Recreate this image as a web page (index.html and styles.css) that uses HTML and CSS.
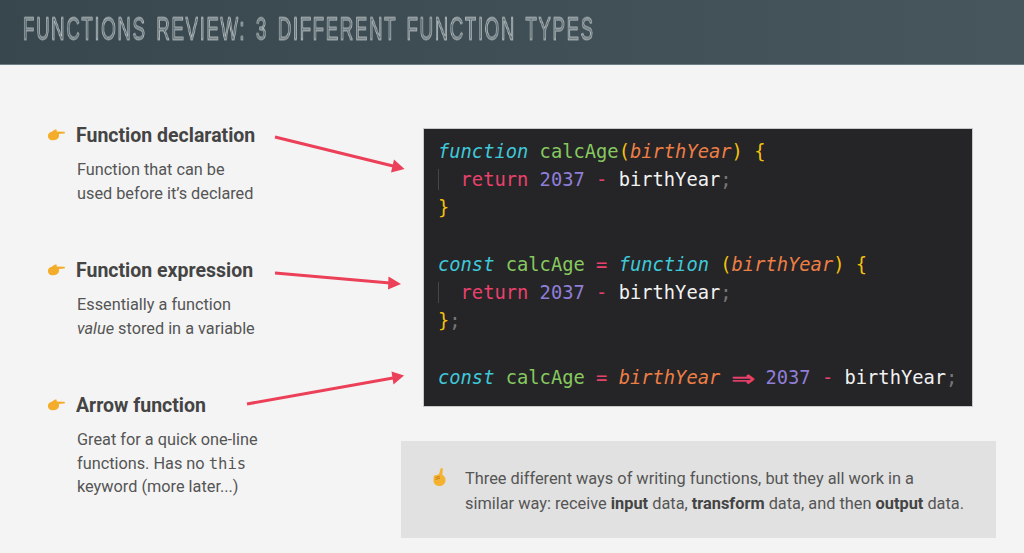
FILE: index.html
```html
<!DOCTYPE html>
<html lang="en">
<head>
<meta charset="utf-8">
<title>Functions Review</title>
<link rel="stylesheet" href="styles.css">
</head>
<body>
<header class="banner"><h1 class="banner-title">FUNCTIONS REVIEW: 3 DIFFERENT FUNCTION TYPES</h1></header>
<main class="slide">
  <section class="kinds">
    <article class="kind">
      <h2 class="kind-title"><svg class="hand" viewBox="0 0 20 14"><path d="M1 8C1 5 3 4 5 3.500L8 1.500C9.500 .8 10.500 1.300 10.300 2.300L10 3.300L18 3.600C19.300 3.800 19.300 5.300 18 5.500L12.500 6C13 8 12.500 10.500 10.500 11.500C8 13 4 13 2.500 11.500C1.500 10.500 1 9.500 1 8Z"/></svg>Function declaration</h2>
      <p class="kind-text">Function that can be<br>used before it’s declared</p>
    </article>
    <article class="kind">
      <h2 class="kind-title"><svg class="hand" viewBox="0 0 20 14"><path d="M1 8C1 5 3 4 5 3.500L8 1.500C9.500 .8 10.500 1.300 10.300 2.300L10 3.300L18 3.600C19.300 3.800 19.300 5.300 18 5.500L12.500 6C13 8 12.500 10.500 10.500 11.500C8 13 4 13 2.500 11.500C1.500 10.500 1 9.500 1 8Z"/></svg>Function expression</h2>
      <p class="kind-text">Essentially a function<br><em>value</em> stored in a variable</p>
    </article>
    <article class="kind">
      <h2 class="kind-title"><svg class="hand" viewBox="0 0 20 14"><path d="M1 8C1 5 3 4 5 3.500L8 1.500C9.500 .8 10.500 1.300 10.300 2.300L10 3.300L18 3.600C19.300 3.800 19.300 5.300 18 5.500L12.500 6C13 8 12.500 10.500 10.500 11.500C8 13 4 13 2.500 11.500C1.500 10.500 1 9.500 1 8Z"/></svg>Arrow function</h2>
      <p class="kind-text">Great for a quick one-line<br>functions. Has no <code class="inline-code">this</code><br>keyword (more later...)</p>
    </article>
  </section>
  <section class="examples">
    <pre class="code"><i class="k">function</i> <span class="f">calcAge</span><span class="b">(</span><i class="p">birthYear</i><span class="b">)</span> <span class="b">{</span>
<span class="guide">  </span><span class="r">return</span> <span class="n">2037</span> <span class="r">-</span> <span class="w">birthYear</span><span class="s">;</span>
<span class="b">}</span>

<i class="k">const</i> <span class="f">calcAge</span> <span class="r">=</span> <i class="k">function</i> <span class="b">(</span><i class="p">birthYear</i><span class="b">)</span> <span class="b">{</span>
<span class="guide">  </span><span class="r">return</span> <span class="n">2037</span> <span class="r">-</span> <span class="w">birthYear</span><span class="s">;</span>
<span class="b">}</span><span class="s">;</span>

<i class="k">const</i> <span class="f">calcAge</span> <span class="r">=</span> <i class="p">birthYear</i> <span class="r arrow">⇒</span> <span class="n">2037</span> <span class="r">-</span> <span class="w">birthYear</span><span class="s">;</span></pre>
    <aside class="note">
      <svg class="point" viewBox="0 0 14 20"><path d="M8.500 1C9.800 .6 10.500 1.300 10.300 2.500L9.800 8C11.800 9 13 10.500 13 13C13 16.500 10.500 19 7 19C3.500 19 1 16.800 1 13.500L1.200 9.500C1.300 8.500 2.500 8 3.500 8.200L6.500 7.200L8 2Z"/><path class="crease" d="M3 10.500L7 9.500M3 12.500L7.500 11"/></svg>
      <p class="note-text">Three different ways of writing functions, but they all work in a<br>similar way: receive <b>input</b> data, <b>transform</b> data, and then <b>output</b> data.</p>
    </aside>
  </section>
  <svg class="arrows" viewBox="0 0 1024 553">
    <path d="M275 137L393 166"/><path class="head" d="M404.500 169L394 159.500L391 172.500Z"/>
    <path d="M275 273L390 283"/><path class="head" d="M401 284L388.500 276.500L388 289.500Z"/>
    <path d="M247 404L393 378"/><path class="head" d="M404 375.500L391.500 371.500L393.500 384.500Z"/>
  </svg>
</main>
</body>
</html>
```
FILE: styles.css
```css
* { box-sizing: border-box; }
html, body { margin: 0; height: 100%; }
body { width: 1024px; height: 553px; overflow: hidden; background: #f4f4f4; font-family: Roboto, "Liberation Sans", sans-serif; color: #444; }

.banner { height: 65px; display: flex; align-items: center; padding: 0 0 5px 23px; background: linear-gradient(90deg, #37474d, #46565c); border-bottom: 1px solid #6e8085; }
.banner-title { margin: 0; font: 400 27px/1 "Liberation Sans", sans-serif; letter-spacing: 2.25px; word-spacing: 4.3px; white-space: nowrap; color: #5f6e73; -webkit-text-stroke: .7px #d4d9da; transform: scale(.695, 1.16); transform-origin: left center; will-change: transform; }

.slide { display: flex; padding: 0 0 0 47px; }
.kinds { width: 354px; padding-top: 58px; flex: none; }
.kind { height: 135px; }
.kind-title { margin: 0; display: flex; align-items: center; font: 700 19.500px/26px Roboto, sans-serif; color: #444; }
.hand { width: 19px; height: 14px; margin-right: 10px; fill: #f4ad2a; flex: none; position: relative; top: -1px; }
.kind-text { margin: 9px 0 0 30px; font: 400 16.300px/23.500px Roboto, sans-serif; color: #555; }
.inline-code { font: 400 15.600px "DejaVu Sans Mono", monospace; color: #555; }

.examples { padding-top: 63px; flex: none; width: 595px; }
.code { margin: 0 0 34px 22px; width: 550px; height: 279px; padding: 9px 0 0 14px; background: #252427; border: 1px solid #c8c8c8; font: 400 18.750px/28.200px "DejaVu Sans Mono", monospace; color: #fff; white-space: pre; }
.k { color: #3fc8d8; }
.f { color: #86c95f; }
.b { color: #f4c20d; }
.p { color: #ed7e45; }
.r { color: #e9416c; }
.n { color: #8f7fd8; }
.w { color: #f2f2f2; }
.s { color: #777; }
.guide { box-shadow: inset 1px 0 0 #47464a; }
.arrow { display: inline-block; width: 2ch; text-align: center; transform: scale(2.05, 1.5); -webkit-text-stroke: .35px #e9416c; }

.note { height: 97px; display: flex; align-items: flex-start; padding: 25px 0 0 31px; background: #e1e1e1; }
.point { width: 15px; height: 20px; flex: none; margin: 1px 18px 0 0; fill: #f4b22e; }
.crease { fill: none; stroke: #b8741a; stroke-width: .8; }
.note-text { margin: 0; font: 400 16.350px/25px Roboto, sans-serif; color: #555; white-space: nowrap; }
.note-text b { color: #444; }

.arrows { position: absolute; left: 0; top: 0; width: 1024px; height: 553px; fill: none; stroke: #ec3f58; stroke-width: 3; pointer-events: none; }
.head { fill: #ec3f58; stroke: none; }
```
